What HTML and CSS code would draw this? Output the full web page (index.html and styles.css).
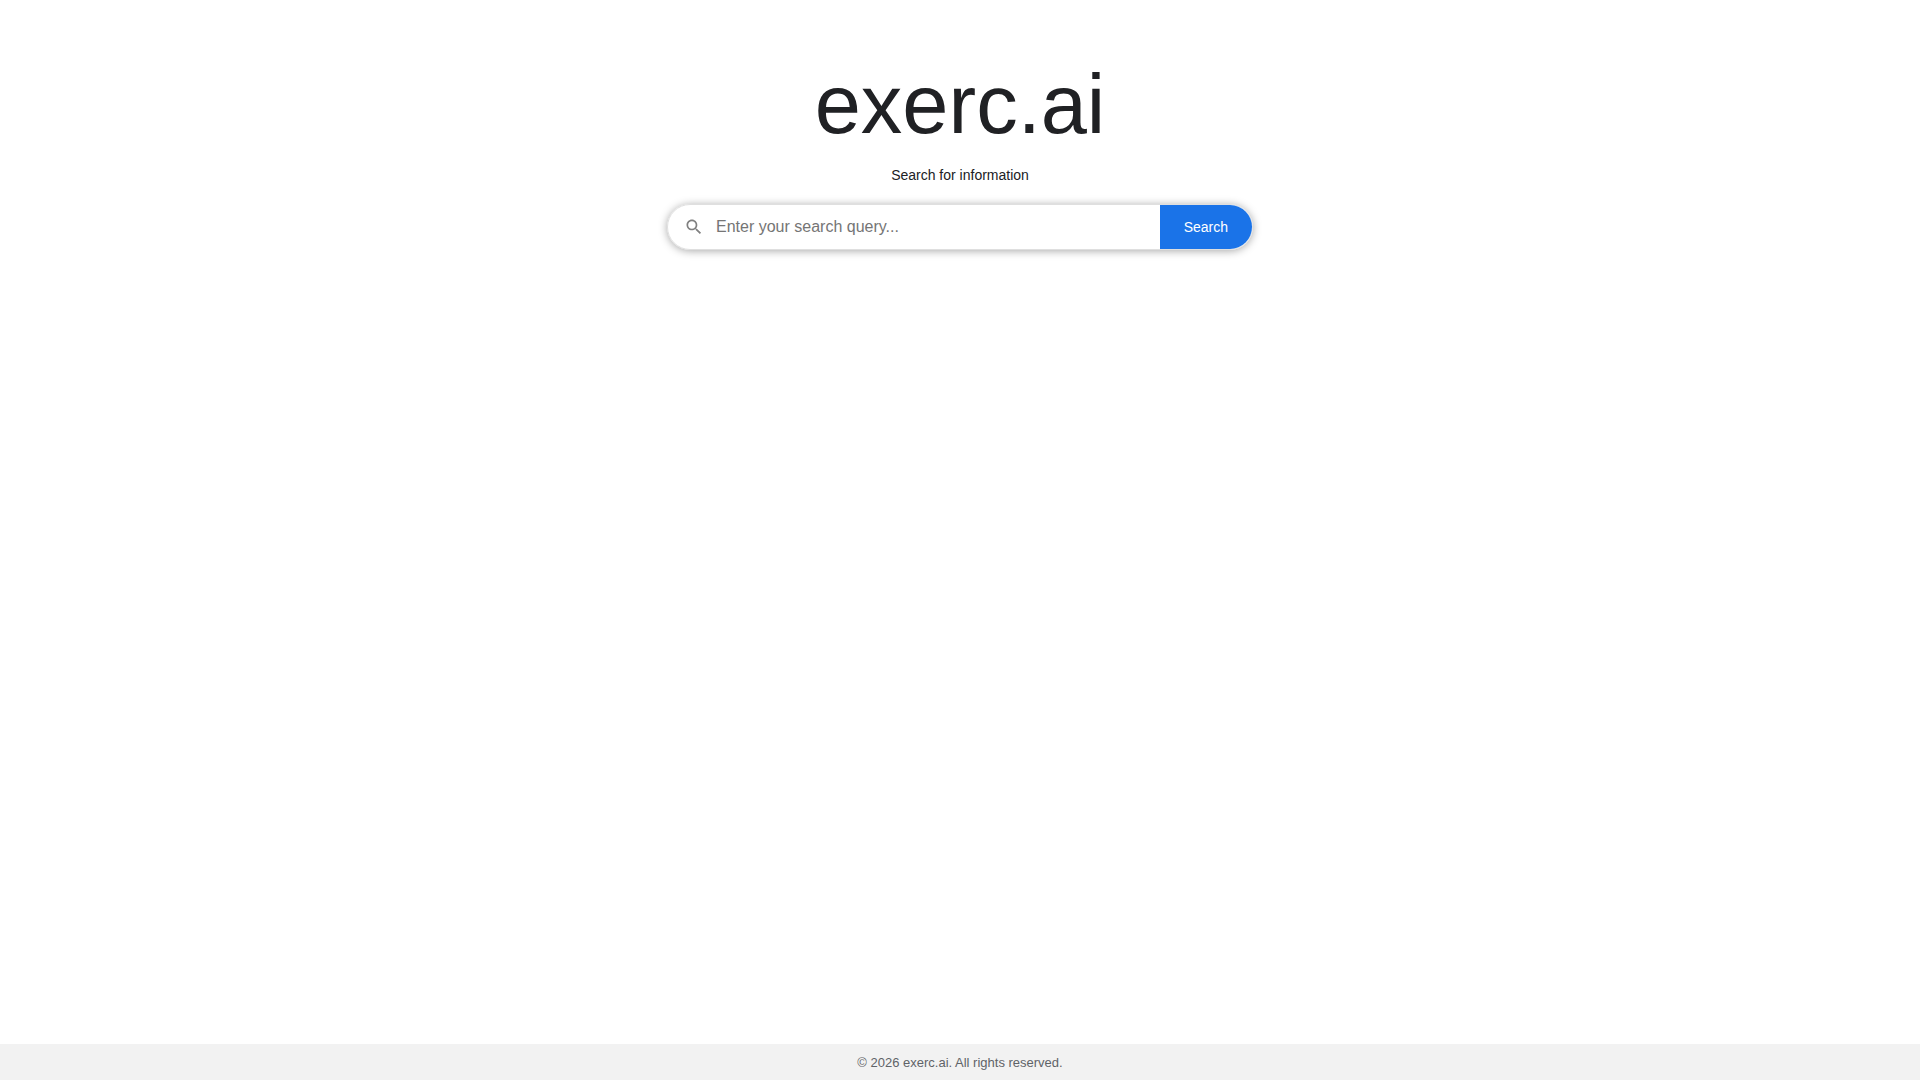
FILE: index.html
```html
<!DOCTYPE html>
<html lang="en">
<head>
    <meta charset="UTF-8">
    <meta name="viewport" content="width=device-width, initial-scale=1.0">
    <title>exerc.ai</title>
    <link rel="stylesheet" href="styles.css">
</head>
<body>

    <main class="container">
        <h1 class="logo">exerc.ai</h1>

        <form class="search-form">
            <label class="search-label" for="query">Search for information</label>
            <div class="search-box">
                <svg class="search-icon" viewBox="0 0 24 24" aria-hidden="true">
                    <path d="M15.5 14h-.79l-.28-.27C15.41 12.59 16 11.11 16 9.5 16 5.91 13.09 3 9.5 3S3 5.91 3 9.5 5.91 16 9.5 16c1.61 0 3.09-.59 4.23-1.57l.27.28v.79l5 4.99L20.49 19l-4.99-5zm-6 0C7.01 14 5 11.99 5 9.5S7.01 5 9.5 5 14 7.01 14 9.5 11.99 14 9.5 14z"/>
                </svg>
                <input type="text" id="query" class="search-input" placeholder="Enter your search query...">
                <button type="submit" class="search-button">Search</button>
            </div>
        </form>
    </main>

    <footer class="footer">&copy; 2026 exerc.ai. All rights reserved.</footer>

</body>
</html>
```
FILE: styles.css
```css
body {
    font-family: Arial, "Liberation Sans", sans-serif;
    background-color: #fff;
    color: #202124;
    margin: 0;
    min-height: 100vh;
    display: flex;
    flex-direction: column;
}
.container {
    flex: 1;
    box-sizing: border-box;
    width: 100%;
    max-width: 586px;
    margin: 0 auto;
    padding-top: 57px;
    text-align: center;
}
.logo {
    font-size: 83px;
    font-weight: normal;
    line-height: 96px;
    margin: 0 0 14px;
}
.search-label {
    display: block;
    font-size: 14px;
    line-height: 16px;
    margin-bottom: 21px;
}
.search-box {
    display: flex;
    align-items: center;
    height: 44px;
    border: 1px solid #dfdfdf;
    border-radius: 24px;
    overflow: hidden;
    box-shadow: 0 1px 8px rgba(0,0,0,0.35);
}
.search-icon {
    width: 20px;
    height: 20px;
    margin: 0 12px 0 16px;
    fill: #808080;
}
.search-input {
    flex: 1;
    min-width: 0;
    padding: 0;
    border: none;
    outline: none;
    font-family: inherit;
    font-size: 16px;
}
.search-button {
    height: 100%;
    padding: 0 24px;
    border: none;
    background-color: #1a73e8;
    color: white;
    font-family: inherit;
    font-size: 14px;
    cursor: pointer;
}
.footer {
    padding: 11px 10px 10px;
    background-color: #f2f2f2;
    color: #5f6368;
    font-size: 13px;
    line-height: 15px;
    text-align: center;
}
```
